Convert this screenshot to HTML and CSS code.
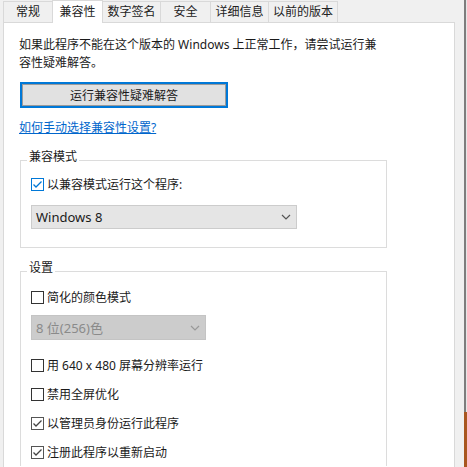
FILE: index.html
```html
<!DOCTYPE html>
<html lang="zh-CN">
<head>
  <meta charset="UTF-8" />
  <title>属性 - 兼容性</title>
  <link rel="stylesheet" href="styles.css">
</head>
<body>

<div class="window">
  <div class="dialog">
    <!-- Вкладки -->
    <div class="tabs">
      <div class="tab tab-general">常规</div>
      <div class="tab tab-compat active">兼容性</div>
      <div class="tab tab-sign">数字签名</div>
      <div class="tab tab-security">安全</div>
      <div class="tab tab-details">详细信息</div>
      <div class="tab tab-versions">以前的版本</div>
    </div>

    <div class="panel">
      <p class="intro">如果此程序不能在这个版本的 Windows 上正常工作，请尝试运行兼<br>容性疑难解答。</p>
      <button class="btn-run">运行兼容性疑难解答</button>
      <a class="help-link" href="#">如何手动选择兼容性设置?</a>

      <fieldset class="group group-mode">
        <legend>兼容模式</legend>
        <label class="check check-first">
          <span class="box box-blue">
            <svg width="11" height="11" viewBox="0 0 11 11"><polyline points="1.5,5.5 4,8 9.5,2.5" /></svg>
          </span>
          以兼容模式运行这个程序:
        </label>
        <div class="select select-os">
          <span>Windows 8</span>
          <svg width="10" height="6" viewBox="0 0 10 6"><polyline points="1,1 5,5 9,1" /></svg>
        </div>
      </fieldset>

      <fieldset class="group group-settings">
        <legend>设置</legend>
        <label class="check check-first">
          <span class="box"></span>
          简化的颜色模式
        </label>
        <div class="select select-color">
          <span>8 位(256)色</span>
          <svg width="10" height="6" viewBox="0 0 10 6"><polyline points="1,1 5,5 9,1" /></svg>
        </div>
        <label class="check check-after-select">
          <span class="box"></span>
          用 640 x 480 屏幕分辨率运行
        </label>
        <label class="check">
          <span class="box"></span>
          禁用全屏优化
        </label>
        <label class="check">
          <span class="box box-gray">
            <svg width="11" height="11" viewBox="0 0 11 11"><polyline points="1.5,5.5 4,8 9.5,2.5" /></svg>
          </span>
          以管理员身份运行此程序
        </label>
        <label class="check">
          <span class="box box-gray">
            <svg width="11" height="11" viewBox="0 0 11 11"><polyline points="1.5,5.5 4,8 9.5,2.5" /></svg>
          </span>
          注册此程序以重新启动
        </label>
      </fieldset>
    </div>
  </div>

  <!-- Край окна справа -->
  <div class="edge"><div class="edge-glow"></div></div>
</div>

</body>
</html>
```

FILE: styles.css
```css
/* Общие стили */
html, body {
  margin: 0;
  padding: 0;
  height: 467px;
  overflow: hidden;
}

body {
  background: #f0f0f0;
  font-family: "Noto Sans", "Noto Sans CJK SC", sans-serif;
  font-size: 12px;
  color: #1a1a1a;
}

.window {
  display: flex;
  height: 467px;
}

/* Диалог свойств */
.dialog {
  width: 464px;
  display: flex;
  flex-direction: column;
  padding-left: 3px;
  box-sizing: border-box;
}

/* Вкладки */
.tabs {
  display: flex;
  align-items: flex-end;
  height: 22px;
}

.tab {
  box-sizing: border-box;
  height: 21px;
  line-height: 20px;
  text-align: center;
  border: 1px solid #d9d9d9;
  border-bottom: none;
  border-right: none;
  background: #f0f0f0;
  color: #222;
}

.tab-versions {
  border-right: 1px solid #d9d9d9;
}

.tab.active {
  height: 23px;
  margin-bottom: -1px;
  background: #fff;
  border-right: 1px solid #d9d9d9;
  position: relative;
  z-index: 1;
  line-height: 21px;
}

.tab-general { width: 49px; }
.tab-compat { width: 51px; }
.tab-sign { width: 57px; border-left: none; }
.tab-security { width: 50px; }
.tab-details { width: 58px; }
.tab-versions { width: 70px; }

/* Белая панель */
.panel {
  flex: 1;
  width: 452px;
  box-sizing: border-box;
  background: #fff;
  border: 1px solid #d9d9d9;
  border-bottom: none;
  padding: 13px 15px 0 15px;
  overflow: hidden;
}

.intro {
  margin: 0;
  line-height: 18px;
  white-space: nowrap;
}

/* Кнопка */
.btn-run {
  display: block;
  margin: 10px 0 0 1px;
  width: 208px;
  height: 26px;
  padding: 0;
  background: #e1e1e1;
  border: 2px solid #0078d7;
  box-shadow: inset 0 0 0 1px #9a9a9a;
  font-family: inherit;
  font-size: 12px;
  color: #1a1a1a;
}

.help-link {
  display: block;
  margin-top: 11px;
  line-height: 18px;
  color: #0066cc;
  text-decoration: underline;
}

/* Группы */
.group {
  margin: 13px 0 0 1px;
  width: 367px;
  box-sizing: border-box;
  border: 1px solid #dcdcdc;
  padding: 0 10px 18px 10px;
}

.group legend {
  padding: 0 2px 6px 2px;
  margin-left: -4px;
  line-height: 14px;
}

.group-settings {
  height: 205px;
  border-bottom: none;
}

/* Флажки */
.check {
  display: flex;
  align-items: center;
  gap: 3px;
  height: 18px;
  margin-top: 11px;
}

.group-mode .check-first {
  margin-top: 5px;
}

.group-settings .check-first {
  margin-top: 7px;
}

.check-after-select {
  margin-top: 16px;
}

.box {
  width: 13px;
  height: 13px;
  box-sizing: border-box;
  border: 1px solid #333;
  display: flex;
  align-items: center;
  justify-content: center;
  background: #fff;
}

.box svg polyline {
  fill: none;
  stroke-width: 1.3;
}

.box-blue {
  border-color: #0078d7;
}

.box-blue svg polyline {
  stroke: #0078d7;
}

.box-gray {
  border-color: #555;
}

.box-gray svg polyline {
  stroke: #444;
}

/* Выпадающие списки */
.select {
  display: flex;
  align-items: center;
  justify-content: space-between;
  box-sizing: border-box;
  padding: 0 5px 0 4px;
  border: 1px solid #cccccc;
  font-size: 13px;
}

.select svg polyline {
  fill: none;
  stroke-width: 1.2;
}

.select-os {
  margin-top: 12px;
  width: 266px;
  height: 24px;
  background: #e5e5e5;
  color: #1a1a1a;
}

.select-os svg polyline {
  stroke: #555;
}

.select-color {
  margin-top: 9px;
  width: 175px;
  height: 25px;
  background: #cccccc;
  border-color: #c4c4c4;
  color: #8a8a8a;
}

.select-color svg polyline {
  stroke: #999;
}

/* Правый край окна */
.edge {
  width: 3px;
  background: linear-gradient(90deg, #7d7d7d 2px, #e6e6e6 2px);
  display: flex;
  flex-direction: column;
  justify-content: flex-end;
}

.edge-glow {
  height: 55px;
  background: #a8561f;
}
```
